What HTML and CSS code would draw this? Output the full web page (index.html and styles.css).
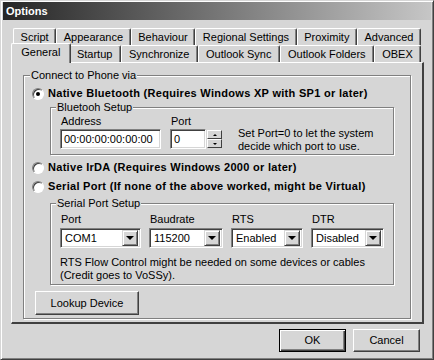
FILE: index.html
```html
<!DOCTYPE html>
<html lang="en">
<head>
  <meta charset="UTF-8" />
  <title>Options</title>
  <link rel="stylesheet" href="styles.css">
</head>
<body>
  <div class="window">
    <div class="titlebar">Options</div>

    <!-- Tab strip, two rows -->
    <div class="tabs">
      <div class="tab-row">
        <div class="tab">Script</div>
        <div class="tab">Appearance</div>
        <div class="tab">Behaviour</div>
        <div class="tab">Regional Settings</div>
        <div class="tab">Proximity</div>
        <div class="tab">Advanced</div>
      </div>
      <div class="tab-row">
        <div class="tab selected">General</div>
        <div class="tab">Startup</div>
        <div class="tab">Synchronize</div>
        <div class="tab">Outlook Sync</div>
        <div class="tab">Outlook Folders</div>
        <div class="tab">OBEX</div>
      </div>
    </div>

    <div class="panel">
      <fieldset class="group connect">
        <legend>Connect to Phone via</legend>

        <div class="radio-row"><span class="radio checked"></span><b>Native Bluetooth (Requires Windows XP with SP1 or later)</b></div>

        <fieldset class="group sub">
          <legend>Bluetooh Setup</legend>
          <div class="field-row">
            <div class="field">
              <label>Address</label>
              <div class="edit w-address">00:00:00:00:00:00</div>
            </div>
            <div class="field">
              <label>Port</label>
              <div class="spin-wrap">
                <div class="edit w-port">0</div>
                <div class="spin">
                  <span class="spin-btn up"></span>
                  <span class="spin-btn down"></span>
                </div>
              </div>
            </div>
            <p class="note port-note">Set Port=0 to let the system<br>decide which port to use.</p>
          </div>
        </fieldset>

        <div class="radio-row irda"><span class="radio"></span><b>Native IrDA (Requires Windows 2000 or later)</b></div>
        <div class="radio-row serial"><span class="radio"></span><b>Serial Port (If none of the above worked, might be Virtual)</b></div>

        <fieldset class="group sub serial-box">
          <legend>Serial Port Setup</legend>
          <div class="field-row combos">
            <div class="field">
              <label>Port</label>
              <div class="combo w-com">COM1<span class="drop"></span></div>
            </div>
            <div class="field">
              <label>Baudrate</label>
              <div class="combo w-baud">115200<span class="drop"></span></div>
            </div>
            <div class="field">
              <label>RTS</label>
              <div class="combo w-rts">Enabled<span class="drop"></span></div>
            </div>
            <div class="field">
              <label>DTR</label>
              <div class="combo w-dtr">Disabled<span class="drop"></span></div>
            </div>
          </div>
          <p class="note rts-note">RTS Flow Control might be needed on some devices or cables<br>(Credit goes to VoSSy).</p>
        </fieldset>

        <button class="btn lookup">Lookup Device</button>
      </fieldset>
    </div>

    <div class="footer">
      <button class="btn default">OK</button>
      <button class="btn">Cancel</button>
    </div>
  </div>
</body>
</html>
```

FILE: styles.css
```css
* {
  box-sizing: border-box;
}
body {
  margin: 0;
  font-family: "Liberation Sans", Arial, sans-serif;
  font-size: 11px;
  line-height: 13px;
  color: #000;
  background: #d6d6d6;
}

/* Window frame */
.window {
  width: 434px;
  height: 360px;
  background: #d6d6d6;
  border: 1px solid;
  border-color: #d6d6d6 #404040 #404040 #d6d6d6;
  box-shadow: inset 1px 1px 0 #fff, inset -1px -1px 0 #808080;
  padding: 1px 2px 2px 2px;
  display: flex;
  flex-direction: column;
}
.titlebar {
  height: 18px;
  background: linear-gradient(to right, #262626, #c6c6c6);
  color: #fff;
  font-weight: bold;
  line-height: 18px;
  padding-left: 3px;
}

/* Tabs */
.tabs {
  margin: 8px 0 0 10px;
  width: 408px;
}
.tab-row {
  display: flex;
  height: 17px;
}
.tab {
  flex: 1 1 auto;
  text-align: center;
  line-height: 16px;
  padding: 0 4px;
  border-top: 1px solid #fff;
  border-left: 1px solid #fff;
  border-right: 1px solid #404040;
  box-shadow: inset -1px 0 0 #808080;
  border-radius: 2px 2px 0 0;
  background: #d6d6d6;
}
.tab.selected {
  position: relative;
  z-index: 1;
  margin: -2px -2px -1px -2px;
  height: 20px;
  padding: 0 6px;
}

/* Page panel */
.panel {
  flex: 1;
  margin: 0 7px 0 8px;
  border: 1px solid;
  border-color: #fff #404040 #404040 #fff;
  border-width: 1px 2px 2px 1px;
  padding: 6px 11px 3px 11px;
}

/* Group boxes */
.group {
  margin: 0;
  border: 1px solid #808080;
  box-shadow: 1px 1px 0 #fff, inset 1px 1px 0 #fff;
  padding: 5px 8px 3px 8px;
}
.group legend {
  padding: 0 1px;
  margin-left: -2px;
  background: #d6d6d6;
  line-height: 13px;
}
.sub {
  margin: 1px 8px 0 18px;
  padding: 1px 9px 5px 9px;
}
.sub legend {
  margin-left: -4px;
}

.radio-row {
  display: flex;
  align-items: center;
  gap: 4px;
  height: 13px;
}
.radio-row b {
  letter-spacing: 0.3px;
}
.radio-row.irda {
  margin-top: 6px;
}
.radio-row.serial {
  margin-top: 6px;
}
.radio {
  width: 12px;
  height: 12px;
  border-radius: 50%;
  border: 1px solid;
  border-color: #808080 #fff #fff #808080;
  box-shadow: inset 1px 1px 0 #404040;
  background: #fff;
  display: flex;
  align-items: center;
  justify-content: center;
}
.radio.checked::after {
  content: "";
  width: 4px;
  height: 4px;
  border-radius: 50%;
  background: #000;
}

/* Field rows */
.field-row {
  display: flex;
  gap: 9px;
}
.field {
  display: flex;
  flex-direction: column;
  gap: 1px;
}
.field label {
  padding-left: 1px;
}
.edit, .combo {
  height: 20px;
  background: #fff;
  border: 1px solid;
  border-color: #808080 #fff #fff #808080;
  box-shadow: inset 1px 1px 0 #404040, inset -1px -1px 0 #d6d6d6;
  padding: 0 3px;
  line-height: 18px;
}
.w-address { width: 101px; }
.w-port { width: 36px; }

.spin-wrap {
  display: flex;
  gap: 1px;
}
.spin {
  display: flex;
  flex-direction: column;
  padding: 1px 0;
}
.spin-btn {
  width: 15px;
  height: 9px;
  background: #d6d6d6;
  border: 1px solid;
  border-color: #fff #404040 #404040 #fff;
  display: flex;
  align-items: center;
  justify-content: center;
}
.spin-btn::after {
  content: "";
  border-left: 2px solid transparent;
  border-right: 2px solid transparent;
}
.spin-btn.up::after {
  border-bottom: 2px solid #000;
}
.spin-btn.down::after {
  border-top: 2px solid #000;
}

.note {
  margin: 0;
}
.port-note {
  margin: 12px 0 -4px 7px;
}

/* Serial box */
.serial-box {
  margin-top: 4px;
  padding: 3px 8px 2px 9px;
}
.combos {
  gap: 8px;
}
.combos .field {
  gap: 2px;
}
.combo {
  display: flex;
  align-items: center;
  justify-content: space-between;
  padding: 0 2px 0 4px;
}
.w-com { width: 81px; }
.w-baud { width: 74px; }
.w-rts { width: 72px; }
.w-dtr { width: 73px; }
.drop {
  width: 16px;
  height: 16px;
  background: #d6d6d6;
  border: 1px solid;
  border-color: #d6d6d6 #404040 #404040 #d6d6d6;
  box-shadow: inset 1px 1px 0 #fff, inset -1px -1px 0 #808080;
  display: flex;
  align-items: center;
  justify-content: center;
}
.drop::after {
  content: "";
  border-left: 4px solid transparent;
  border-right: 4px solid transparent;
  border-top: 4px solid #000;
}
.rts-note {
  margin-top: 8px;
}

/* Buttons */
.btn {
  font: inherit;
  color: #000;
  background: #d6d6d6;
  border: 1px solid;
  border-color: #fff #404040 #404040 #fff;
  box-shadow: inset -1px -1px 0 #808080;
  padding: 0;
}
.lookup {
  display: block;
  width: 104px;
  height: 24px;
  margin: 6px 0 0 3px;
}
.footer {
  display: flex;
  justify-content: flex-end;
  gap: 7px;
  padding: 5px 11px 5px 0;
}
.footer .btn {
  width: 67px;
  height: 23px;
}
.btn.default {
  border: 1px solid #000;
  box-shadow: inset 1px 1px 0 #fff, inset -1px -1px 0 #404040, inset -2px -2px 0 #808080;
}
```
